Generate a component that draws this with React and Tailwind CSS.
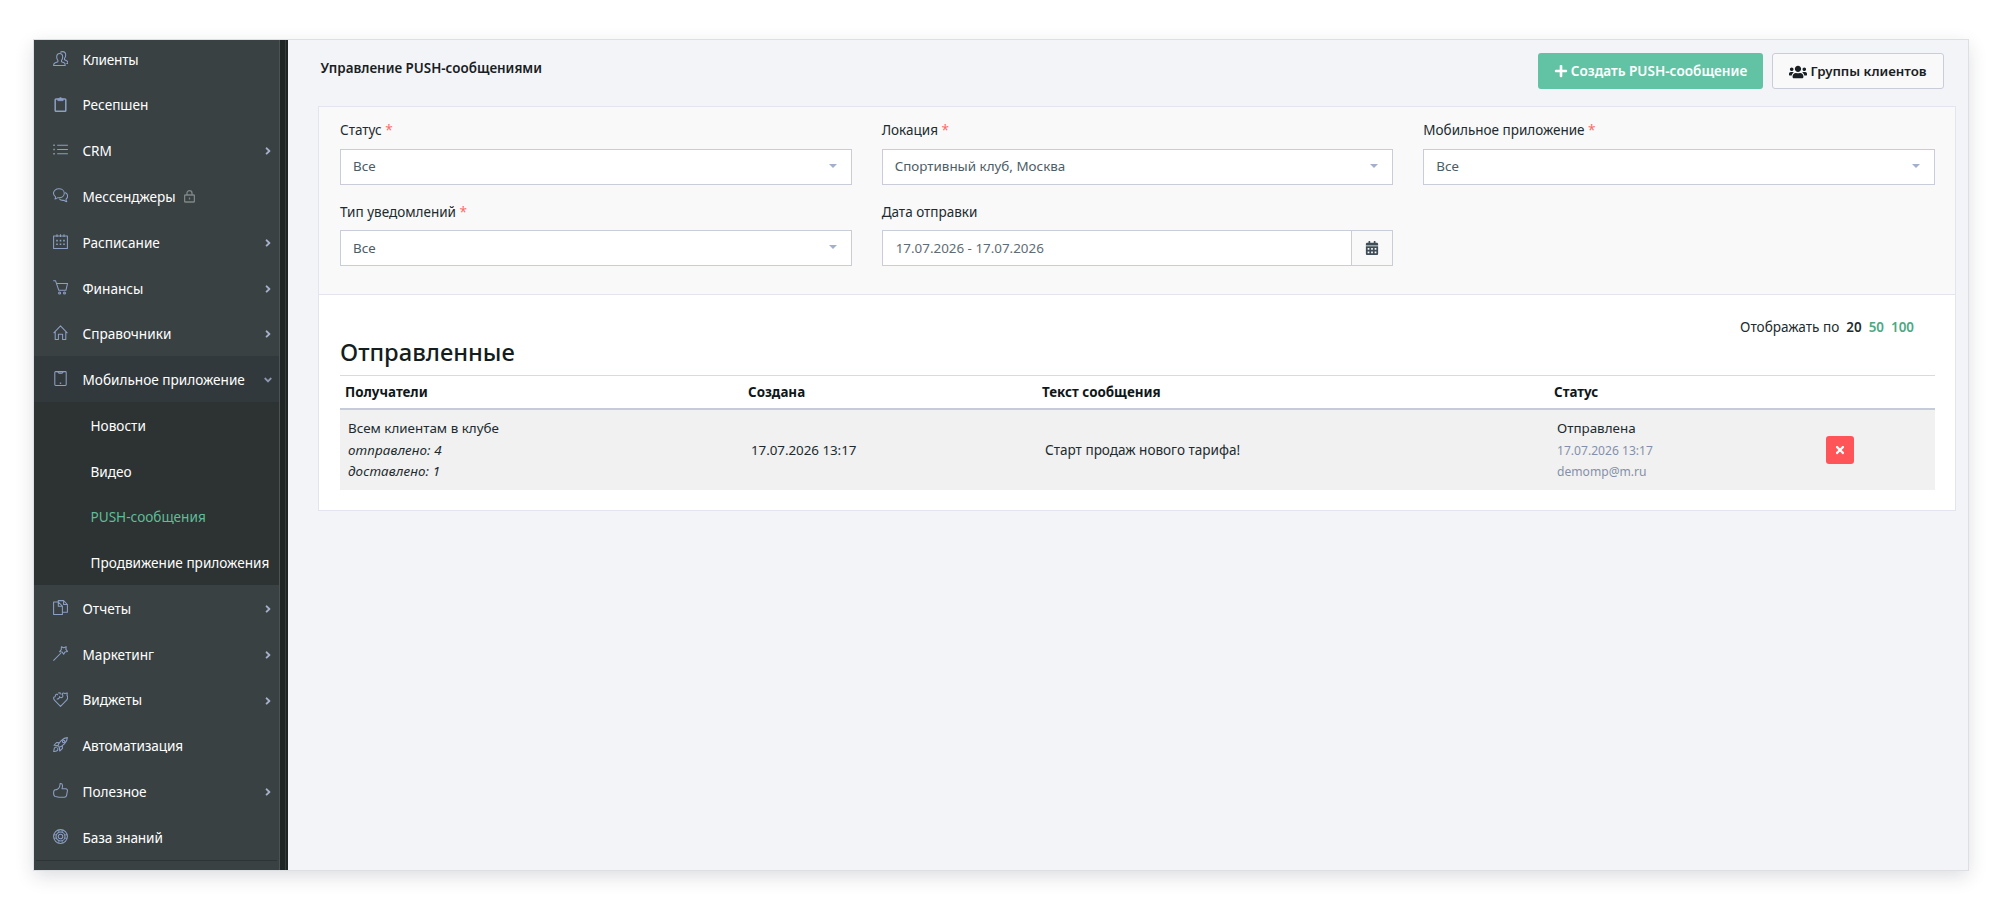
import { FaAngleDown, FaAngleRight, FaCalendarAlt, FaPlus, FaTimes, FaUsers } from 'react-icons/fa';

const icons = {
  users: (
    <>
      <path d="M.6 14.4h11.6c0-1.7-.3-2.3-1.1-2.6L8.5 10.7V9.3c.9-.9 1.2-1.9 1.2-3.4 0-2.1-1.2-3.4-3-3.4s-3 1.3-3 3.4c0 1.5.4 2.5 1.2 3.4v1.4l-3.1 1.2C.9 12.3.6 13 .6 14.4z" />
      <path d="M7.3 1.4c.5-.5 1.3-.8 2.2-.8 1.9 0 3.2 1.3 3.2 3.4 0 1.5-.4 2.5-1.2 3.3v1.5l2.1.9c.9.4 1.3 1.1 1.3 2.7h-1.6" />
    </>
  ),
  clipboard: (
    <>
      <rect x="2.2" y="2" width="10.6" height="12.3" rx=".8" strokeWidth="1.5" />
      <path d="M4.8 3.7V1.7h1.4C6.3.9 6.8.5 7.5.5s1.2.4 1.3 1.2h1.4v2z" fill="currentColor" strokeWidth=".6" />
    </>
  ),
  list: (
    <>
      <path d="M4.2 3.2h10.7M4.2 7.5h10.7M4.2 11.8h10.7" />
      <path d="M.3 3.2h1.5M.3 7.5h1.5M.3 11.8h1.5" strokeWidth="1.6" />
    </>
  ),
  chat: (
    <>
      <path d="M2.6 8.9C1.3 7.9.5 6.7.5 5.3.5 2.7 2.9.8 5.9.8s5.4 1.9 5.4 4.5-2.4 4.5-5.4 4.5c-.5 0-1 0-1.4-.1-.6.8-1.4 1.2-2.5 1.2.4-.6.6-1.2.6-2z" />
      <path d="M12.2 4.6c1.5.7 2.4 2 2.4 3.5 0 1.3-.6 2.4-1.6 3.1 0 1 .2 1.7.8 2.5-1.3 0-2.1-.5-2.7-1.4-2 .3-3.9-.3-4.9-1.6" />
    </>
  ),
  calendar: (
    <>
      <path d="M.6 1.9h13.8v12.5H.6zM4 .2v2.8M7.5.2v2.8M11 .2v2.8" />
      <path d="M3.2 6.6h1.6M6.7 6.6h1.6M10.2 6.6h1.6M3.2 10.3h1.6M6.7 10.3h1.6M10.2 10.3h1.6" strokeWidth="1.6" />
    </>
  ),
  cart: (
    <>
      <path d="M.2.7h2.3l3.3 9.6h7.1l1.6-6.8H3.5" />
      <circle cx="6.6" cy="13" r="1" />
      <circle cx="11.5" cy="13" r="1" />
    </>
  ),
  home: <path d="M.6 8.1 7.5.9l6.9 7.2M2.2 6.8v7.6h3.2V9.2h4.2v5.2h3.2V6.8" />,
  tablet: (
    <>
      <rect x="1.8" y=".6" width="11.4" height="13.8" rx=".8" />
      <path d="M5 .9c.2.9.6 1.2 1.2 1.2h2.6c.6 0 1-.3 1.2-1.2" />
      <path d="M6.8 12.2h1.4" strokeWidth="1.3" />
    </>
  ),
  files: (
    <>
      <path d="M5.3 2H.6v12.4h8.8V6.2L5.3 2zM5.3 2v4.2h4.1" />
      <path d="M5.3 2V.6h5.3l3.8 3.9v7.7h-5M10.6.6v3.9h3.8" />
    </>
  ),
  wand: (
    <>
      <path d="M.4 14.6 8 7" />
      <path d="m8.4.7 2.3 1.1 2.5-1-.3 2.6 1.6 2-2.6.5-1.2 2.3-1.5-2.1-2.6-.4 1.7-2z" />
    </>
  ),
  heart: (
    <path d="M2.3 4.9C1.4 4.7.6 5 .6 6.2c.1 1 .6 1.800 1.300 2.500l5.600 5.700 5.600-5.700c1.600-1.700 1.800-3.900.9-5.300l.3-2.500-2.400.7C10.900.6 9.600.9 8.900 2c1 .8 1.300 2.200.5 3.100-.9.900-2.300.6-2.800-.5-.1 1.700-1.400 2.700-2.900 2.300M2.300 4.900c-.2-1.300.3-2.500 1.500-3M3.800 1.900l1.100 1.200M5.200 1l2-.2.200 1.600" />
  ),
  rocket: (
    <>
      <path d="M5.2 9.8c-.4-1.2.6-3.8 3-6.2C10.3 1.5 12.8.6 14.4.6c0 1.6-.9 4.1-3 6.2-2.4 2.4-5 3.4-6.2 3zM6.3 5.7 3.6 5.5 1 8.3l3.6.3M9.3 8.7l.2 2.7-2.8 2.6-.3-3.6" />
      <circle cx="10.6" cy="4.4" r="1.2" />
      <path d="M4.2 10.2c-1.3-.6-2.7.2-3 1.4-.2.9-.1 1.8-.6 2.8 1 .1 2.1 0 2.9-.4 1.3-.5 1.7-1.9 1.1-3" />
    </>
  ),
  thumb: (
    <path d="M4.4 6.2C6.3 5.4 7 3.5 7.1.6c1.4-.1 2.3.6 2.4 1.9.1 1.1-.2 2.2-.5 3.2h3.6c1.3 0 2 .9 1.8 2.1l-.8 4.6c-.2 1.2-1 1.9-2.3 1.900H5.900c-1.900 0-2.300-.7-3.700-.8C1 13.200.6 12 .6 10.100s.4-3.100 1.700-3.300c.8-.1 1.400-.3 2.100-.6z" />
  ),
  support: (
    <>
      <circle cx="7.5" cy="7.5" r="6.9" />
      <circle cx="7.5" cy="7.5" r="4.5" />
      <circle cx="7.5" cy="7.5" r="2.3" />
      <path d="M5.8.9v2.8M9.2.9v2.8M5.8 11.3v2.8M9.2 11.3v2.8M.9 5.8h2.8M.9 9.2h2.8M11.3 5.8h2.8M11.3 9.2h2.8" strokeWidth=".8" />
    </>
  ),
};

const NavIcon = ({ name }) => (
  <svg viewBox="0 0 15 15" className="size-[15px] shrink-0 -mt-[3px] text-[#8c9fc4]" fill="none" stroke="currentColor" strokeWidth="1.05" strokeLinejoin="round">
    {icons[name]}
  </svg>
);

const Lock = () => (
  <svg viewBox="0 0 11 13" className="w-[11px] h-[13px] ml-2 -mt-px text-[#7f8686]" fill="none" stroke="currentColor" strokeWidth="1.3">
    <rect x=".6" y="5" width="9.8" height="7" rx=".8" />
    <path d="M3 5V3.2C3 1.7 4 .7 5.5.7S8 1.7 8 3.2V5M5.5 7.4v2.2" />
  </svg>
);

const menu = [
  { icon: 'users', label: 'Клиенты', font: 'tracking-[-0.2px]' },
  { icon: 'clipboard', label: 'Ресепшен' },
  { icon: 'list', label: 'CRM', arrow: true },
  { icon: 'chat', label: 'Мессенджеры', lock: true },
  { icon: 'calendar', label: 'Расписание', arrow: true },
  { icon: 'cart', label: 'Финансы', arrow: true },
  { icon: 'home', label: 'Справочники', arrow: true },
  {
    icon: 'tablet', label: 'Мобильное приложение', open: true,
    children: ['Новости', 'Видео', 'PUSH-сообщения', 'Продвижение приложения'],
  },
  { icon: 'files', label: 'Отчеты', arrow: true },
  { icon: 'wand', label: 'Маркетинг', arrow: true },
  { icon: 'heart', label: 'Виджеты', arrow: true },
  { icon: 'rocket', label: 'Автоматизация', font: 'tracking-[-0.1px]' },
  { icon: 'thumb', label: 'Полезное', arrow: true },
  { icon: 'support', label: 'База знаний', font: 'tracking-[-0.1px]' },
];

const activeItem = 'PUSH-сообщения';

const Sidebar = () => (
  <aside className="w-[254px] shrink-0 flex bg-[#1f2525] overflow-hidden">
    <nav className="w-[246px] bg-[#394143] border-r border-[#4b5355] text-[13.6px] text-white">
      <ul className="-mt-1">
        {menu.map(item => (
          <li key={item.label}>
            <a className={`flex items-center h-[45.77px] pt-[2px] pl-[18.5px] pr-[5px] ${item.open ? 'bg-[#32393c]' : ''}`}>
              <NavIcon name={item.icon} />
              <span className={`ml-[15px] whitespace-nowrap ${item.font || ''}`}>{item.label}</span>
              {item.lock && <Lock />}
              {item.arrow && <FaAngleRight size={12} className="ml-auto text-[#a5b0c8]" />}
              {item.open && <FaAngleDown size={12} className="ml-auto text-[#8e99b0]" />}
            </a>
            {item.children && (
              <ul className="bg-[#2c3332]">
                {item.children.map(child => (
                  <li key={child} className={`flex items-center h-[45.77px] pt-[2px] pl-[56.5px] whitespace-nowrap ${child === activeItem ? 'text-[#5fbd98]' : ''}`}>
                    {child}
                  </li>
                ))}
              </ul>
            )}
          </li>
        ))}
      </ul>
      <div className="mx-0.5 border-t border-[#2d3435]" />
    </nav>
    <div className="w-1.5 border-r border-[#343b3b]" />
  </aside>
);

const Label = ({ text, required }) => (
  <div className="h-[25px] leading-[25px] mb-[5.5px] text-[13.5px] text-[#212b2f]">
    {text} {required && <span className="text-[#fb6a6c]">*</span>}
  </div>
);

const Select = ({ label, value }) => (
  <div>
    <Label text={label} required />
    <div className="flex items-center justify-between h-9 pl-3 pr-[14px] border border-[#c9cdda] bg-white text-[#4d5d66]">
      <span>{value}</span>
      <svg viewBox="0 0 8 4" className="w-2 h-1 -mt-0.5 text-[#a3b0cb]"><path d="M0 0h8L4 4z" fill="currentColor" /></svg>
    </div>
  </div>
);

const DateRange = ({ label, value }) => (
  <div>
    <Label text={label} />
    <div className="flex h-9 border border-[#c9cdda] bg-white text-[#5f6c75]">
      <div className="flex-1 flex items-center pl-[13px]">{value}</div>
      <div className="w-[41px] flex items-center justify-center border-l border-[#c9cdda] bg-[#f9f9f9]">
        <FaCalendarAlt size={14} className="text-[#3f4d58]" />
      </div>
    </div>
  </div>
);

const messages = [
  {
    id: 1, recipients: 'Всем клиентам в клубе', sent: 4, delivered: 1, created: '17.07.2026 13:17',
    text: 'Старт продаж нового тарифа!', status: 'Отправлена', statusAt: '17.07.2026 13:17', author: 'demomp@m.ru',
  },
];

const Messages = () => (
  <section className="h-[215px] pl-[21px] pr-5 pt-5 bg-white">
    <div className="flex justify-end pr-[21px] h-6 leading-6 text-[#212b2f]">
      <span className="text-[13.6px]">Отображать по</span>
      <b className="ml-[7px] font-semibold">20</b>
      <a className="ml-[7px] font-semibold text-[#4ca982]">50</a>
      <a className="ml-[7px] font-semibold text-[#4ca982]">100</a>
    </div>
    <h2 className="h-9 -mt-[5px] mb-[5px] leading-9 text-[23.7px] font-medium text-[#141d20]">Отправленные</h2>
    <table className="w-full table-fixed border-collapse text-left text-[#212b2f]">
      <colgroup>
        <col className="w-[403px]" />
        <col className="w-[294px]" />
        <col className="w-[512px]" />
        <col className="w-[269px]" />
        <col />
      </colgroup>
      <thead>
        <tr className="h-[33px] border-t border-b-2 border-t-[#d6dae6] border-b-[#c6cbdc] text-[#0f1719]">
          <th className="px-[5px] py-0 font-bold">Получатели</th>
          <th className="px-[5px] py-0 font-bold">Создана</th>
          <th className="px-[5px] py-0 font-bold">Текст сообщения</th>
          <th className="px-[5px] py-0 font-bold">Статус</th>
          <th />
        </tr>
      </thead>
      <tbody>
        {messages.map(m => (
          <tr key={m.id} className="h-[81px] bg-[#f1f1f1] leading-[21.4px]">
            <td className="px-2 pt-[2px]">
              {m.recipients}
              <div className="italic tracking-[0.1px]">отправлено: {m.sent}</div>
              <div className="italic tracking-[0.1px]">доставлено: {m.delivered}</div>
            </td>
            <td className="px-2 pt-[2px] tracking-[-0.05px]">{m.created}</td>
            <td className="px-2 pt-[2px] text-[13.55px]">{m.text}</td>
            <td className="px-2 pt-[2px]">
              {m.status}
              <div className="text-[12.1px] text-[#8490ab]">{m.statusAt}</div>
              <div className="text-[12.1px] text-[#8490ab]">{m.author}</div>
            </td>
            <td className="px-2">
              <button className="flex items-center justify-center size-7 rounded-[3px] bg-[#ff5558] text-white">
                <FaTimes size={12} />
              </button>
            </td>
          </tr>
        ))}
      </tbody>
    </table>
  </section>
);

const App = () => (
  <div className="h-[912px] bg-white pt-10 pl-[34px] font-['Noto_Sans','Segoe_UI',sans-serif] text-[13.4px]">
    <div className="flex w-[1934px] h-[830px] shadow-[0_0_0_1px_#dedfe4,0_6px_18px_rgba(30,35,60,0.16)]">
      <Sidebar />
      <main className="flex-1 bg-[#f3f4f8] pl-[30px] pr-3">
        <header className="flex justify-between h-[66px] pt-[13px]">
          <h1 className="ml-[2.5px] h-[30px] leading-[30px] font-semibold text-[#182023]">Управление PUSH-сообщениями</h1>
          <div className="flex gap-[9px] mr-3 font-semibold">
            <button className="flex items-center justify-center w-[225px] h-9 gap-[3px] rounded-[3px] bg-[#62c3a4] text-[13.6px] text-white">
              <FaPlus size={14} />Создать PUSH-сообщение
            </button>
            <button className="flex items-center justify-center w-[172px] h-9 pt-px gap-[3px] rounded-[3px] border border-[#c9cdda] bg-[#f9f9f9] text-[13.3px] text-[#182023]">
              <FaUsers size={18} />Группы клиентов
            </button>
          </div>
        </header>
        <div className="border border-[#e2e5ef]">
          <section className="grid grid-cols-3 gap-x-[30px] gap-y-[15px] content-start h-[188px] pl-[21px] pr-5 pt-[11px] border-b border-[#e2e5ef] bg-[#f9f9f9]">
            <Select label="Статус" value="Все" />
            <Select label="Локация" value="Спортивный клуб, Москва" />
            <Select label="Мобильное приложение" value="Все" />
            <Select label="Тип уведомлений" value="Все" />
            <DateRange label="Дата отправки" value="17.07.2026 - 17.07.2026" />
          </section>
          <Messages />
        </div>
      </main>
    </div>
  </div>
);

export default App;
